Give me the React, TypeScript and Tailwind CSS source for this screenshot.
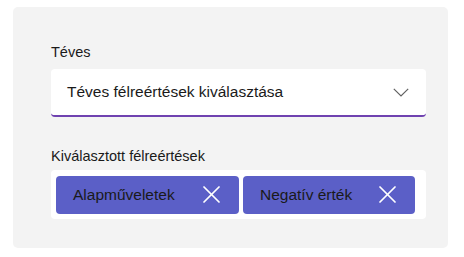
const chips = ["Alapműveletek", "Negatív érték"];

function Chevron() {
  return (
    <svg width="16" height="9" viewBox="0 0 16 9" fill="none" stroke="#616161" strokeWidth="1.2">
      <polyline points="0.8,0.8 8,8 15.2,0.8" />
    </svg>
  );
}

function Cross() {
  return (
    <svg width="17" height="17" viewBox="0 0 17 17" fill="none" stroke="white" strokeWidth="1.7" strokeLinecap="round">
      <line x1="1" y1="1" x2="16" y2="16" />
      <line x1="16" y1="1" x2="1" y2="16" />
    </svg>
  );
}

export default function App() {
  return (
    <div className="w-[464px] h-[257px] bg-white pt-[7px] pl-[13px] font-['Liberation_Sans',Arial,sans-serif]">
      <div className="w-[435px] h-[241px] rounded-[5px] bg-[#f3f3f3] pl-[38px] pr-[22px] pt-[35px]">
        <div className="text-[14.5px] leading-[20px] text-[#1a1a1a]">Téves</div>
        <div className="mt-[7px] h-[48px] rounded-[4px] bg-white border-b-2 border-[#6f42b0] flex items-center justify-between pl-4 pr-[17px]">
          <span className="text-[15.5px] text-[#1a1a1a] leading-[20px]">Téves félreértések kiválasztása</span>
          <Chevron />
        </div>
        <div className="mt-[29px] text-[14.5px] leading-[20px] text-[#1a1a1a]">Kiválasztott félreértések</div>
        <div className="mt-[4px] h-[49px] rounded-[4px] bg-white flex items-center gap-[4px] px-[5px]">
          {chips.map((c, i) => (
            <div
              key={c}
              className={`h-[38px] rounded-[4px] bg-[#5b5fc7] flex items-center justify-between pl-[17px] pr-[19px] ${i === 0 ? "w-[183px]" : "w-[172px]"}`}
            >
              <span className="text-[15.5px] text-[#1a1a1a] leading-[20px]">{c}</span>
              <Cross />
            </div>
          ))}
        </div>
      </div>
    </div>
  );
}
